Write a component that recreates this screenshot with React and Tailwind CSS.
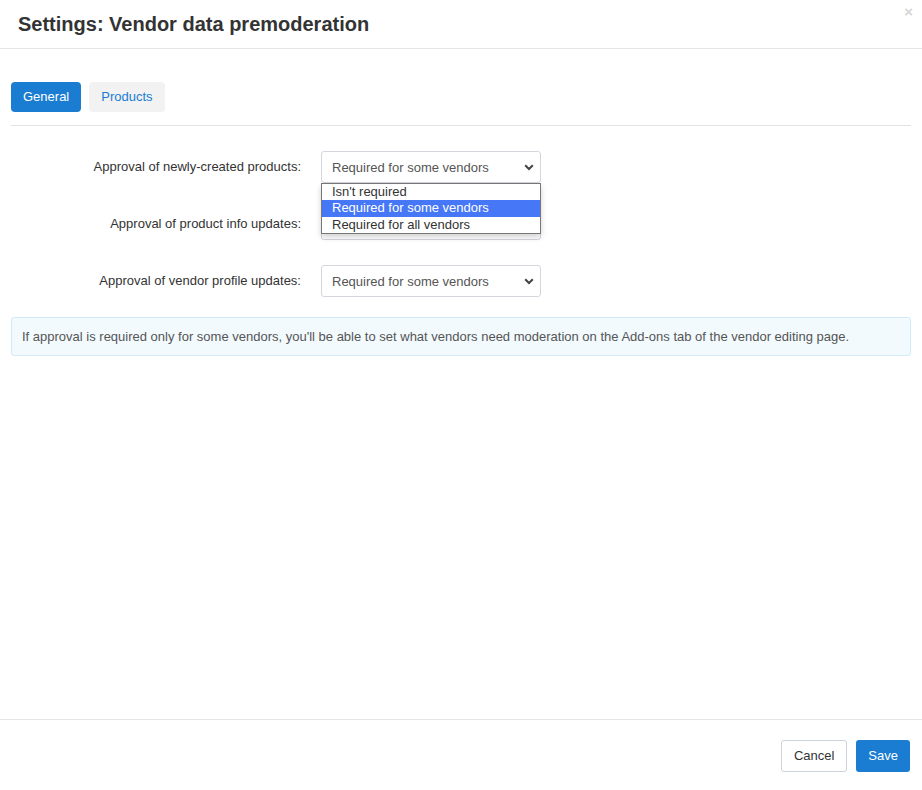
import React from "react";

const font = { fontFamily: '"Liberation Sans", Arial, sans-serif' };

function Chevron() {
  return (
    <svg width="10" height="7" viewBox="0 0 10 7" className="shrink-0">
      <path d="M1.2 1.2 L5 5 L8.8 1.2" fill="none" stroke="#444" strokeWidth="2" />
    </svg>
  );
}

function Select({ value }) {
  return (
    <div className="flex h-[32px] w-[220px] items-center justify-between rounded-[3px] border border-[#d3d7dd] bg-white pl-[10px] pr-[6px] pt-[1px] text-[13px] text-[#555]">
      <span>{value}</span>
      <Chevron />
    </div>
  );
}

function Row({ label, children }) {
  return (
    <div className="flex items-center">
      <div className="w-[290px] text-right text-[13px] text-[#333]">{label}</div>
      <div className="relative ml-[20px]">{children}</div>
    </div>
  );
}

export default function App() {
  return (
    <div style={font} className="relative flex h-[790px] w-full flex-col bg-white">
      <div className="absolute right-[9px] top-[4px] text-[15px] font-bold leading-none text-[#d6d6d6]">×</div>
      <div className="flex h-[49px] shrink-0 items-center border-b border-[#e6e6e6] pl-[18px]">
        <h1 className="text-[20px] font-bold text-[#333]">Settings: Vendor data premoderation</h1>
      </div>
      <div className="flex-1 px-[11px] pt-[33px]">
        <div className="flex gap-[8px]">
          <div className="flex h-[30px] items-center rounded-[4px] bg-[#1a7dd1] px-[12px] text-[13px] text-white">General</div>
          <div className="flex h-[30px] items-center rounded-[4px] bg-[#f2f2f2] px-[12px] text-[13px] text-[#1a7dd1]">Products</div>
        </div>
        <div className="mt-[13px] border-b border-[#e3e3e3]" />
        <div className="mt-[25px] flex flex-col gap-[25px]">
          <Row label="Approval of newly-created products:">
            <Select value="Required for some vendors" />
          </Row>
          <Row label="Approval of product info updates:">
            <Select value="" />
            <div className="absolute left-0 top-[-25px] w-[220px] border border-[#767676] bg-white text-[13px] leading-[16.4px] text-[#333] shadow-[0_3px_6px_rgba(0,0,0,0.18)]">
              <div className="pl-[10px]">Isn't required</div>
              <div className="bg-[#4577f6] pl-[10px] text-white">Required for some vendors</div>
              <div className="pl-[10px]">Required for all vendors</div>
            </div>
          </Row>
          <Row label="Approval of vendor profile updates:">
            <Select value="Required for some vendors" />
          </Row>
        </div>
        <div className="mt-[20px] flex h-[39px] items-center rounded-[3px] border border-[#d2ebf8] bg-[#f2fafe] px-[10px] text-[13px] text-[#555]">
          If approval is required only for some vendors, you'll be able to set what vendors need moderation on the Add-ons tab of the vendor editing page.
        </div>
      </div>
      <div className="flex h-[71px] shrink-0 items-start justify-end gap-[9px] border-t border-[#e6e6e6] pr-[12px] pt-[20px]">
        <div className="flex h-[32px] items-center rounded-[3px] border border-[#cdd3da] bg-white px-[12px] text-[13px] text-[#333]">Cancel</div>
        <div className="flex h-[32px] items-center rounded-[3px] bg-[#1a7dd1] px-[12px] text-[13px] text-white">Save</div>
      </div>
    </div>
  );
}
